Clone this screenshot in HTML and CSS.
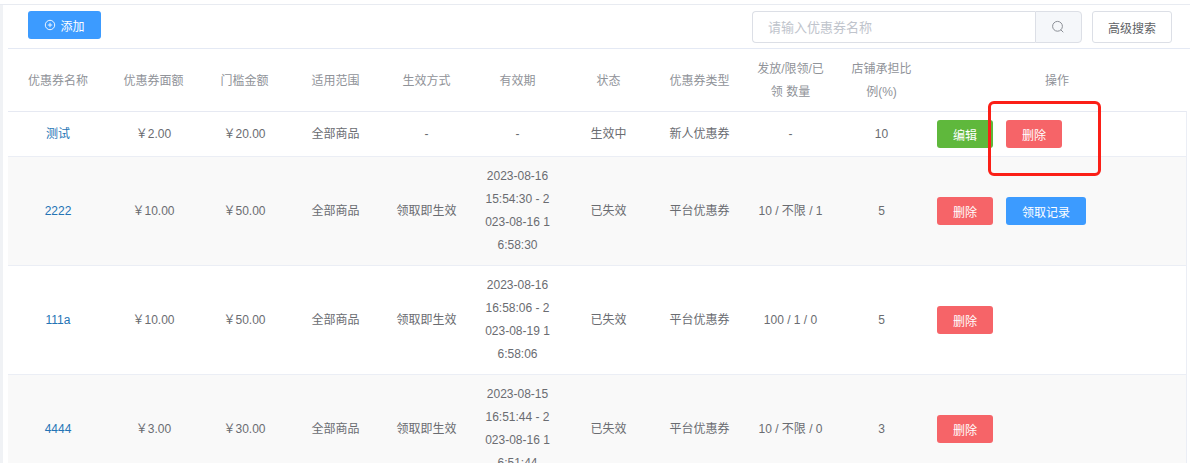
FILE: index.html
```html
<!DOCTYPE html>
<html lang="zh-CN">
<head>
<meta charset="utf-8">
<title>优惠券</title>
<link rel="stylesheet" href="styles.css">
</head>
<body>
<main class="panel">
  <div class="toolbar">
    <button class="btn btn-primary btn-add">
      <svg class="add-icon" viewBox="0 0 12 12" width="12" height="12"><circle cx="6" cy="6" r="4.7" fill="none" stroke="#fff" stroke-width="0.9"/><path d="M3.8 6h4.4M6 3.8v4.4" stroke="#fff" stroke-width="0.9"/></svg>
      <span>添加</span>
    </button>
    <div class="toolbar-right">
      <div class="search">
        <input class="search-input" placeholder="请输入优惠券名称">
        <span class="search-btn">
          <svg viewBox="0 0 14 14" width="14" height="14"><circle cx="6.5" cy="6.3" r="4.9" fill="none" stroke="#8b8f96" stroke-width="1"/><path d="M10 10l2 2" stroke="#8b8f96" stroke-width="1" stroke-linecap="round"/></svg>
        </span>
      </div>
      <button class="btn btn-plain">高级搜索</button>
    </div>
  </div>
  <table class="grid">
    <colgroup>
      <col class="c-first"><col class="c-n"><col class="c-n"><col class="c-n"><col class="c-n"><col class="c-n"><col class="c-n"><col class="c-n"><col class="c-n"><col class="c-n"><col class="c-op">
    </colgroup>
    <thead>
      <tr>
        <th>优惠券名称</th><th>优惠券面额</th><th>门槛金额</th><th>适用范围</th><th>生效方式</th><th>有效期</th><th>状态</th><th>优惠券类型</th><th>发放/限领/已领 数量</th><th>店铺承担比例(%)</th><th>操作</th>
      </tr>
    </thead>
    <tbody>
      <tr>
        <td><a class="link">测试</a></td><td>￥2.00</td><td>￥20.00</td><td>全部商品</td><td>-</td><td class="dates">-</td><td>生效中</td><td>新人优惠券</td><td>-</td><td>10</td>
        <td class="ops"><button class="btn btn-small btn-success">编辑</button><button class="btn btn-small btn-danger">删除</button></td>
      </tr>
      <tr class="alt">
        <td><a class="link">2222</a></td><td>￥10.00</td><td>￥50.00</td><td>全部商品</td><td>领取即生效</td><td class="dates">2023-08-16 15:54:30 - 2023-08-16 16:58:30</td><td>已失效</td><td>平台优惠券</td><td>10 / 不限 / 1</td><td>5</td>
        <td class="ops"><button class="btn btn-small btn-danger">删除</button><button class="btn btn-small btn-primary btn-record">领取记录</button></td>
      </tr>
      <tr>
        <td><a class="link">111a</a></td><td>￥10.00</td><td>￥50.00</td><td>全部商品</td><td>领取即生效</td><td class="dates">2023-08-16 16:58:06 - 2023-08-19 16:58:06</td><td>已失效</td><td>平台优惠券</td><td>100 / 1 / 0</td><td>5</td>
        <td class="ops"><button class="btn btn-small btn-danger">删除</button></td>
      </tr>
      <tr class="alt">
        <td><a class="link">4444</a></td><td>￥3.00</td><td>￥30.00</td><td>全部商品</td><td>领取即生效</td><td class="dates">2023-08-15 16:51:44 - 2023-08-16 16:51:44</td><td>已失效</td><td>平台优惠券</td><td>10 / 不限 / 0</td><td>3</td>
        <td class="ops"><button class="btn btn-small btn-danger">删除</button></td>
      </tr>
    </tbody>
  </table>
</main>
<div class="annotation"></div>
</body>
</html>
```
FILE: styles.css
```css
* { box-sizing: border-box; }
html, body { height: 100%; }
body {
  margin: 0;
  overflow: hidden;
  background: #fff;
  font-family: "Liberation Sans", "Noto Sans CJK SC", sans-serif;
  font-size: 12px;
  color: #6a6c71;
}
.panel {
  height: 463px;
  margin-top: 4px;
  border-top: 1px solid #e8ebf1;
  padding-left: 8px;
  position: relative;
  overflow: hidden;
  background: linear-gradient(to right, #f0f2f5 3px, #fff 3px);
}
.toolbar {
  display: flex;
  justify-content: space-between;
  align-items: flex-start;
  height: 44px;
  padding: 6px 18px 0 20px;
  border-bottom: 1px solid #e4e9f4;
  background: #fff;
}
.toolbar-right { display: flex; gap: 10px; }
.btn {
  font-family: inherit;
  font-size: 12px;
  border: 1px solid transparent;
  border-radius: 3px;
  padding: 0;
  cursor: pointer;
  display: inline-flex;
  align-items: center;
  justify-content: center;
}
.btn-primary { background: #3c9bff; color: #fff; }
.btn-add { width: 73px; height: 28px; gap: 4px; }
.add-icon { display: block; }
.btn-plain { width: 80px; height: 32px; background: #fff; border-color: #dcdfe6; color: #606266; }
.search { display: flex; width: 330px; height: 32px; }
.search-input {
  flex: 1;
  min-width: 0;
  border: 1px solid #dcdfe6;
  border-right: 0;
  border-radius: 4px 0 0 4px;
  padding: 0 15px;
  font-family: inherit;
  font-size: 13px;
  outline: none;
}
.search-input::placeholder { color: #c0c4cc; }
.search-btn {
  width: 47px;
  padding-right: 2px;
  display: flex;
  align-items: center;
  justify-content: center;
  background: #f5f7fa;
  border: 1px solid #dcdfe6;
  border-radius: 0 4px 4px 0;
}
.grid {
  width: 1179px;
  table-layout: fixed;
  border-collapse: separate;
  border-spacing: 0;
  background: #fff;
}
.c-first { width: 100px; }
.c-n { width: 91px; }
.c-op { width: 260px; }
th {
  height: 62px;
  padding: 9px 10px 7px;
  font-weight: 400;
  color: #909399;
  line-height: 23px;
  text-align: center;
  word-break: break-all;
}
td {
  padding: 8px 10px;
  line-height: 23px;
  text-align: center;
  word-break: break-all;
  border-bottom: 1px solid #ebeef5;
}
td.dates { padding-left: 11px; padding-right: 11px; }
tbody tr:first-child td { border-top: 1px solid #e6e9f2; }
tbody td:last-child { border-right: 1px solid #ebeef5; }
.alt td { background: #f9f9f9; }
.link { color: #2474b5; }
td.ops { text-align: left; }
.ops .btn + .btn { margin-left: 13px; }
.btn-small { width: 56px; height: 28px; vertical-align: middle; }
.btn-success { background: #5fb83c; color: #fff; }
.btn-danger { background: #f66468; color: #fff; }
.btn-record { width: 80px; }
.annotation {
  position: absolute;
  left: 988px;
  top: 101px;
  width: 113px;
  height: 75px;
  border: 3px solid #fb1f17;
  border-radius: 6px;
  pointer-events: none;
}
```
